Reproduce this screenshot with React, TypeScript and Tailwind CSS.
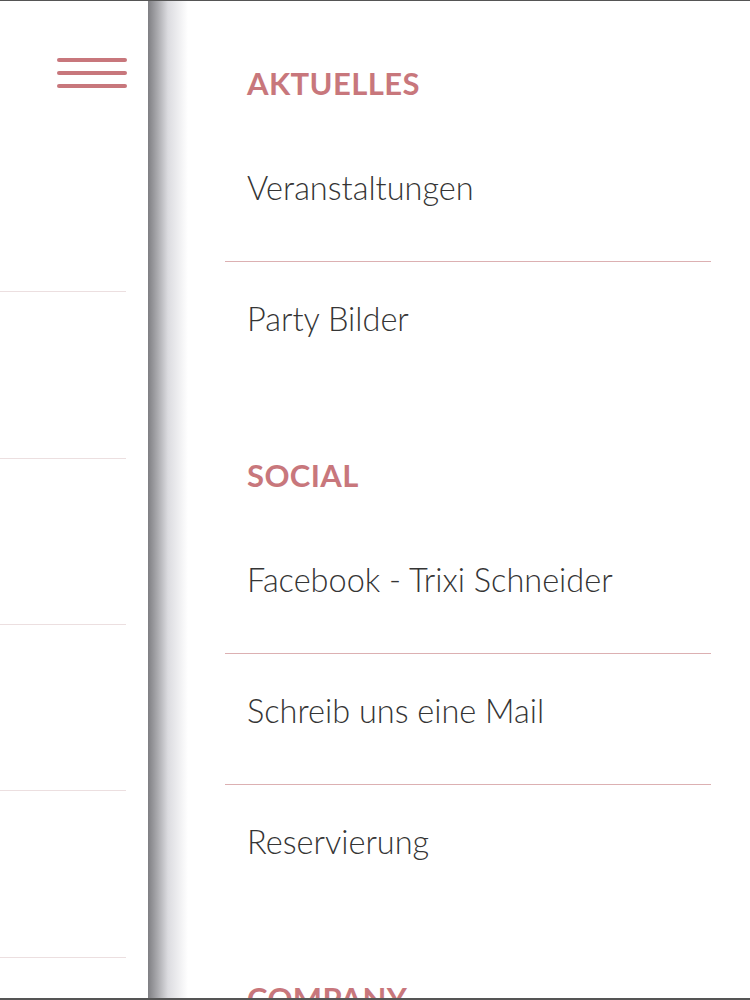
import React from "react";

const Item = ({ label, divider }: { label: string; divider: boolean }) => (
  <div className={`h-[131px] ${divider ? "border-b border-[#dcb0b2]" : ""}`}>
    <div className="pl-[22px] pt-[38px] text-[32.5px] leading-[38px] font-light text-[#353535]">
      {label}
    </div>
  </div>
);

const Heading = ({ label }: { label: string }) => (
  <div className="h-[130px] pl-[22px] pt-[63px] text-[31px] leading-[38px] font-bold text-[#c8777c] tracking-[0.4px]">
    {label}
  </div>
);

export default function App() {
  return (
    <div
      className="w-[750px] h-[1000px] overflow-hidden flex bg-white border-t border-b-2 border-[#555]"
      style={{ fontFamily: "Lato, 'Noto Sans', sans-serif" }}
    >
      <div className="w-[148px] shrink-0 relative">
        <div className="pl-[57px] pt-[57px] flex flex-col gap-[9px]">
          <div className="w-[70px] h-[4px] bg-[#c8777c] rounded-full" />
          <div className="w-[70px] h-[4px] bg-[#c8777c] rounded-full" />
          <div className="w-[70px] h-[4px] bg-[#c8777c] rounded-full" />
        </div>
        <div className="mt-[203px] w-[126px] flex flex-col">
          <div className="h-[167px] border-t border-[#ecdfe0]" />
          <div className="h-[166px] border-t border-[#ecdfe0]" />
          <div className="h-[166px] border-t border-[#ecdfe0]" />
          <div className="h-[167px] border-t border-[#ecdfe0]" />
          <div className="h-[166px] border-t border-[#ecdfe0]" />
        </div>
      </div>
      <div className="flex-1 flex relative">
        <div className="absolute left-0 top-0 bottom-0 w-[40px] bg-gradient-to-r from-[#7f7f83] via-[#dcdce0] to-white" />
        <div className="ml-[77px] w-[486px] relative">
          <Heading label="AKTUELLES" />
          <Item label="Veranstaltungen" divider />
          <Item label="Party Bilder" divider={false} />
          <Heading label="SOCIAL" />
          <Item label="Facebook - Trixi Schneider" divider />
          <Item label="Schreib uns eine Mail" divider />
          <Item label="Reservierung" divider={false} />
          <Heading label="COMPANY" />
        </div>
      </div>
    </div>
  );
}
